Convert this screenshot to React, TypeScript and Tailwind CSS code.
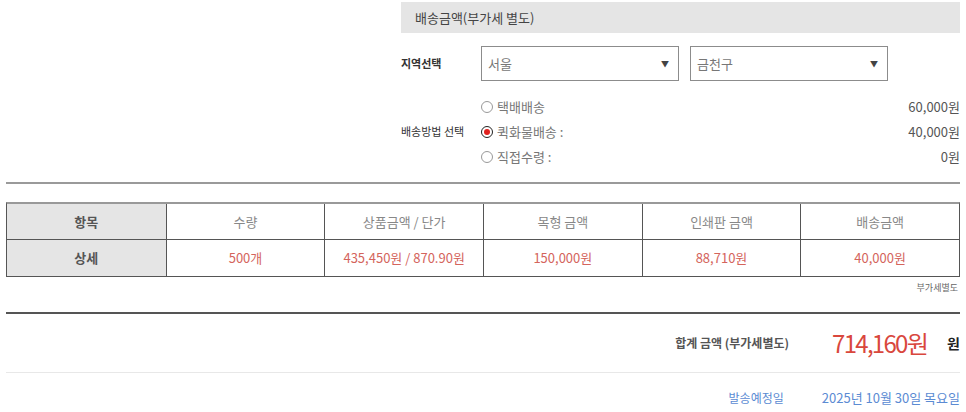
import React from 'react';

const methods = [
  { label: '택배배송', price: '60,000원', checked: false },
  { label: '퀵화물배송 :', price: '40,000원', checked: true },
  { label: '직접수령 :', price: '0원', checked: false },
];

const columns = [
  { head: '항목', value: '상세' },
  { head: '수량', value: '500개' },
  { head: '상품금액 / 단가', value: '435,450원 / 870.90원' },
  { head: '목형 금액', value: '150,000원' },
  { head: '인쇄판 금액', value: '88,710원' },
  { head: '배송금액', value: '40,000원' },
];

function Select({ value }: { value: string }) {
  return (
    <div className="w-[198px] h-[35px] border border-[#8c8c8c] flex items-center justify-between pl-[6px] pr-[9px]">
      <span className="text-[13px] text-[#777]">{value}</span>
      <span className="text-[8px] text-[#444]">▼</span>
    </div>
  );
}

function Radio({ checked }: { checked: boolean }) {
  return (
    <span
      className={
        checked
          ? 'w-[12px] h-[12px] rounded-full border border-[#222] flex items-center justify-center'
          : 'w-[12px] h-[12px] rounded-full border border-[#999] flex items-center justify-center'
      }
    >
      {checked && <span className="w-[6px] h-[6px] rounded-full bg-[#e0201e]" />}
    </span>
  );
}

export default function App() {
  return (
    <div
      className="w-[966px] h-[412px] bg-white px-[6px] pt-[2px] overflow-hidden"
      style={{ fontFamily: '"Noto Sans CJK KR", "Noto Sans", sans-serif' }}
    >
      <div className="ml-[395px]">
        <div className="h-[31px] bg-[#e5e5e5] flex items-center pl-[14px] text-[13px] text-[#444]">
          배송금액(부가세 별도)
        </div>

        <div className="mt-[13px] flex items-center">
          <div className="w-[80px] text-[11px] font-bold text-[#333]">지역선택</div>
          <div className="flex gap-[11px]">
            <Select value="서울" />
            <Select value="금천구" />
          </div>
        </div>

        <div className="mt-[13px] flex items-center">
          <div className="w-[80px] text-[11px] text-[#333]">배송방법 선택</div>
          <div className="flex-1 flex flex-col">
            {methods.map(m => (
              <div key={m.label} className="h-[25px] flex items-center justify-between">
                <div className="flex items-center gap-[4px] text-[13px] text-[#777]">
                  <Radio checked={m.checked} />
                  <span>{m.label}</span>
                </div>
                <span className="text-[13px] text-[#555]">{m.price}</span>
              </div>
            ))}
          </div>
        </div>
      </div>

      <div className="mt-[13px] h-[2px] bg-[#9a9a9a]" />

      <div className="mt-[18px] grid grid-cols-6 border-t-2 border-t-[#999] border-x border-b border-[#555]">
        {columns.map((c, i) => (
          <div
            key={c.head}
            className={
              i === 0
                ? 'h-[36px] flex items-center justify-center text-[13px] font-bold text-[#555] bg-[#e5e5e5] border-b border-[#555]'
                : 'h-[36px] flex items-center justify-center text-[13px] text-[#888] border-l border-b border-[#555]'
            }
          >
            {c.head}
          </div>
        ))}
        {columns.map((c, i) => (
          <div
            key={c.value}
            className={
              i === 0
                ? 'h-[36px] flex items-center justify-center text-[13px] font-bold text-[#555] bg-[#e5e5e5]'
                : 'h-[36px] flex items-center justify-center text-[13px] text-[#d4645c] border-l border-[#555]'
            }
          >
            {c.value}
          </div>
        ))}
      </div>

      <div className="mt-[4px] text-right text-[9px] text-[#666] pr-[2px] leading-[14px]">부가세별도</div>

      <div className="mt-[17px] h-[2px] bg-[#555]" />

      <div className="h-[58px] flex items-center justify-end">
        <span className="text-[12px] font-bold text-[#555]">합계 금액 (부가세별도)</span>
        <span className="ml-[43px] text-[24px] tracking-[-1.7px] text-[#d9473d] leading-none">714,160원</span>
        <span className="ml-[20px] text-[14px] font-bold text-[#222]">원</span>
      </div>

      <div className="h-px bg-[#e8e8e8]" />

      <div className="h-[50px] flex items-center justify-end gap-[38px] text-[13px] text-[#5b8bd3]">
        <span className="text-[12px]">발송예정일</span>
        <span>2025년 10월 30일 목요일</span>
      </div>
    </div>
  );
}
